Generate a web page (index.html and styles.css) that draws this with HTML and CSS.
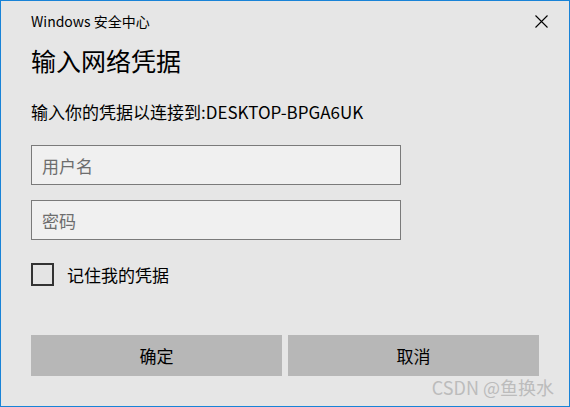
FILE: index.html
```html
<!DOCTYPE html>
<html>
<head>
  <meta charset="UTF-8">
  <title>Windows 安全中心</title>
  <link rel="stylesheet" href="styles.css">
</head>
<body>
  <div class="window">
    <div class="titlebar">
      <div class="title">Windows 安全中心</div>
      <div class="close">
        <svg width="13" height="13" viewBox="0 0 13 13">
          <path d="M0.5 0.5 L12.5 12.5 M12.5 0.5 L0.5 12.5" stroke="#000" stroke-width="1.1" fill="none"/>
        </svg>
      </div>
    </div>

    <h1 class="heading">输入网络凭据</h1>
    <p class="desc">输入你的凭据以连接到:DESKTOP-BPGA6UK</p>

    <div class="field"><span class="placeholder">用户名</span></div>
    <div class="field field-second"><span class="placeholder">密码</span></div>

    <label class="remember">
      <span class="checkbox"></span>
      <span>记住我的凭据</span>
    </label>

    <div class="buttons">
      <div class="btn">确定</div>
      <div class="btn">取消</div>
    </div>

    <div class="watermark">CSDN @鱼换水</div>
  </div>
</body>
</html>
```

FILE: styles.css
```css
/* Cuadro de credenciales */
body {
  margin: 0;
  font-family: "Noto Sans CJK SC", "Liberation Sans", sans-serif;
}

.window {
  position: relative;
  width: 570px;
  height: 407px;
  box-sizing: border-box;
  border: 1px solid #1883d7;
  background-color: #e6e6e6;
  padding: 0 29px 0 30px;
  color: #000;
}

/* Barra de titulo */
.titlebar {
  display: flex;
  align-items: center;
  justify-content: space-between;
  height: 40px;
  margin-right: -29px;
}

.title {
  font-size: 14px;
}

.close {
  width: 45px;
  height: 40px;
  margin-right: 5px;
  display: flex;
  align-items: center;
  justify-content: center;
}

.heading {
  margin: 0;
  height: 38px;
  line-height: 38px;
  font-size: 25px;
  font-weight: normal;
}

.desc {
  margin: 21px 0 0;
  height: 24px;
  line-height: 24px;
  font-size: 17px;
}

/* Campos */
.field {
  margin-top: 21px;
  width: 370px;
  height: 40px;
  box-sizing: border-box;
  border: 1px solid #7a7a7a;
  background-color: #f0f0f0;
  display: flex;
  align-items: center;
  padding-left: 10px;
}

.field-second {
  margin-top: 15px;
}

.placeholder {
  font-size: 17px;
  color: #6d6d6d;
}

.remember {
  margin-top: 22px;
  display: flex;
  align-items: center;
  height: 24px;
  font-size: 17px;
}

.checkbox {
  width: 19px;
  height: 19px;
  border: 2px solid #333;
  background-color: #e4e4e4;
  margin-right: 13px;
}

/* Botones */
.buttons {
  margin-top: 49px;
  display: flex;
  gap: 6px;
  padding-right: 1px;
}

.btn {
  flex: 1;
  height: 41px;
  line-height: 41px;
  text-align: center;
  background-color: #b7b7b7;
  font-size: 17px;
}

.watermark {
  position: absolute;
  right: 15px;
  bottom: 6px;
  font-size: 18px;
  color: #bcbcbc;
}
```
